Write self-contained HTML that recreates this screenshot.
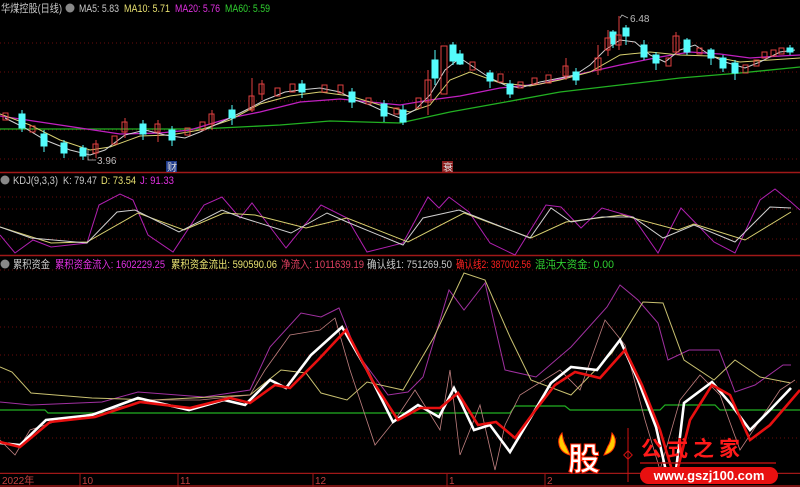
<!DOCTYPE html>
<html><head><meta charset="utf-8"><style>
html,body{margin:0;padding:0;background:#000;width:800px;height:487px;overflow:hidden}
svg{display:block}
text{font-family:"Liberation Sans","Noto Sans CJK SC",sans-serif}
</style></head><body>
<svg width="800" height="487" viewBox="0 0 800 487" xmlns="http://www.w3.org/2000/svg">
<rect width="800" height="487" fill="#000"/>
<g stroke="#6a0d0d" stroke-width="1" stroke-dasharray="1,3">
<line x1="0" y1="43" x2="800" y2="43"/><line x1="0" y1="72" x2="800" y2="72"/><line x1="0" y1="101" x2="800" y2="101"/><line x1="0" y1="130" x2="800" y2="130"/><line x1="0" y1="159" x2="800" y2="159"/>
<line x1="0" y1="197" x2="800" y2="197"/><line x1="0" y1="209" x2="800" y2="209"/><line x1="0" y1="224" x2="800" y2="224"/><line x1="0" y1="239" x2="800" y2="239"/>
<line x1="0" y1="270" x2="800" y2="270"/><line x1="0" y1="299" x2="800" y2="299"/><line x1="0" y1="327" x2="800" y2="327"/><line x1="0" y1="355" x2="800" y2="355"/><line x1="0" y1="382" x2="800" y2="382"/><line x1="0" y1="438" x2="800" y2="438"/>
</g>
<g stroke="#a01818" stroke-width="1.5">
<line x1="0" y1="172.5" x2="800" y2="172.5"/><line x1="0" y1="255.5" x2="800" y2="255.5"/><line x1="0" y1="473.5" x2="800" y2="473.5"/><line x1="0" y1="486" x2="800" y2="486"/>
</g>
<g font-size="11">
<text x="1" y="12" fill="#c8c8c8" textLength="61" lengthAdjust="spacingAndGlyphs">华煤控股(日线)</text>
<circle cx="70" cy="8" r="4.5" fill="#888"/>
<text x="79" y="12" fill="#c8c8c8" textLength="40" lengthAdjust="spacingAndGlyphs">MA5: 5.83</text>
<text x="124" y="12" fill="#e8e070" textLength="46" lengthAdjust="spacingAndGlyphs">MA10: 5.71</text>
<text x="175" y="12" fill="#e030e0" textLength="45" lengthAdjust="spacingAndGlyphs">MA20: 5.76</text>
<text x="225" y="12" fill="#30d030" textLength="45" lengthAdjust="spacingAndGlyphs">MA60: 5.59</text>
<circle cx="5" cy="180" r="4.5" fill="#888"/>
<text x="13" y="184" fill="#c8c8c8" textLength="45" lengthAdjust="spacingAndGlyphs">KDJ(9,3,3)</text>
<text x="63" y="184" fill="#c8c8c8" textLength="34" lengthAdjust="spacingAndGlyphs">K: 79.47</text>
<text x="101" y="184" fill="#e8e070" textLength="35" lengthAdjust="spacingAndGlyphs">D: 73.54</text>
<text x="140" y="184" fill="#e030e0" textLength="34" lengthAdjust="spacingAndGlyphs">J: 91.33</text>
<circle cx="5" cy="264" r="4.5" fill="#888"/>
<text x="13" y="268" fill="#c8c8c8" textLength="37" lengthAdjust="spacingAndGlyphs">累积资金</text>
<text x="55" y="268" fill="#e030e0" textLength="110" lengthAdjust="spacingAndGlyphs">累积资金流入: 1602229.25</text>
<text x="171" y="268" fill="#e8e070" textLength="106" lengthAdjust="spacingAndGlyphs">累积资金流出: 590590.06</text>
<text x="281" y="268" fill="#e04060" textLength="83" lengthAdjust="spacingAndGlyphs">净流入: 1011639.19</text>
<text x="367" y="268" fill="#c8c8c8" textLength="85" lengthAdjust="spacingAndGlyphs">确认线1: 751269.50</text>
<text x="456" y="268" fill="#ff2020" textLength="75" lengthAdjust="spacingAndGlyphs">确认线2: 387002.56</text>
<text x="535" y="268" fill="#30d030" textLength="79" lengthAdjust="spacingAndGlyphs">混沌大资金: 0.00</text>
</g>
<polyline fill="none" stroke="#22b022" stroke-width="1.3" points="0,129 100,129 200,129 280,125 330,121 400,123 450,112 500,103 560,92 620,85 680,78 740,73 800,67"/>
<polyline fill="none" stroke="#c020c0" stroke-width="1.3" points="0,116 40,122 80,128 120,134 160,133 190,130 230,118 260,112 300,102 340,99 370,102 400,105 430,100 460,96 500,88 540,84 580,74 620,65 660,57 690,52 720,54 750,58 780,56 800,55"/>
<polyline fill="none" stroke="#d8d070" stroke-width="1" points="0,114 30,125 60,140 90,150 110,147 140,136 170,135 200,130 230,120 260,104 290,96 320,92 350,96 380,105 410,112 430,105 450,80 470,72 500,83 530,86 560,80 590,72 620,55 650,52 680,55 710,56 740,62 770,60 800,58"/>
<polyline fill="none" stroke="#d0d0d0" stroke-width="1" points="5,118 25,128 45,140 70,150 90,155 105,150 125,135 145,130 165,135 185,138 200,132 215,125 230,118 250,108 265,100 285,92 300,90 320,88 340,92 355,100 370,105 385,112 400,118 415,110 430,95 445,70 460,58 475,68 490,78 505,85 520,88 540,82 560,78 575,75 590,65 605,50 620,40 635,42 650,55 665,62 680,50 695,45 710,55 725,62 745,68 760,62 780,52 795,50"/>
<g stroke-width="1">
<g fill="#54fcfc" stroke="#54fcfc">
<line x1="22" y1="110" x2="22" y2="132"/><rect x="19" y="114" width="6" height="14"/>
<line x1="44" y1="130" x2="44" y2="152"/><rect x="41" y="134" width="6" height="12"/>
<line x1="64" y1="140" x2="64" y2="158"/><rect x="61" y="143" width="6" height="10"/>
<line x1="83" y1="145" x2="83" y2="160"/><rect x="80" y="148" width="6" height="8"/>
<line x1="143" y1="120" x2="143" y2="140"/><rect x="140" y="124" width="6" height="10"/>
<line x1="172" y1="126" x2="172" y2="146"/><rect x="169" y="130" width="6" height="10"/>
<line x1="232" y1="105" x2="232" y2="125"/><rect x="229" y="110" width="6" height="8"/>
<line x1="302" y1="80" x2="302" y2="98"/><rect x="299" y="84" width="6" height="8"/>
<line x1="352" y1="88" x2="352" y2="108"/><rect x="349" y="92" width="6" height="10"/>
<line x1="384" y1="100" x2="384" y2="122"/><rect x="381" y="104" width="6" height="12"/>
<line x1="403" y1="105" x2="403" y2="125"/><rect x="400" y="110" width="6" height="12"/>
<line x1="435" y1="50" x2="435" y2="85"/><rect x="432" y="60" width="6" height="18"/>
<line x1="453" y1="42" x2="453" y2="65"/><rect x="450" y="45" width="6" height="16"/>
<line x1="460" y1="50" x2="460" y2="65"/><rect x="457" y="54" width="6" height="10"/>
<line x1="490" y1="70" x2="490" y2="88"/><rect x="487" y="73" width="6" height="8"/>
<line x1="510" y1="80" x2="510" y2="98"/><rect x="507" y="84" width="6" height="10"/>
<line x1="576" y1="68" x2="576" y2="85"/><rect x="573" y="72" width="6" height="8"/>
<line x1="613" y1="30" x2="613" y2="48"/><rect x="610" y="32" width="6" height="12"/>
<line x1="626" y1="25" x2="626" y2="45"/><rect x="623" y="28" width="6" height="8"/>
<line x1="644" y1="40" x2="644" y2="60"/><rect x="641" y="45" width="6" height="12"/>
<line x1="656" y1="52" x2="656" y2="70"/><rect x="653" y="55" width="6" height="8"/>
<line x1="687" y1="38" x2="687" y2="55"/><rect x="684" y="40" width="6" height="12"/>
<line x1="711" y1="48" x2="711" y2="65"/><rect x="708" y="50" width="6" height="8"/>
<line x1="723" y1="55" x2="723" y2="72"/><rect x="720" y="58" width="6" height="10"/>
<line x1="735" y1="60" x2="735" y2="80"/><rect x="732" y="63" width="6" height="10"/>
<line x1="790" y1="45" x2="790" y2="55"/><rect x="787" y="48" width="6" height="4"/>
</g>
<g fill="none" stroke="#e04040">
<rect x="3" y="113" width="5" height="7"/>
<rect x="30" y="126" width="5" height="6"/>
<line x1="96" y1="140" x2="96" y2="158"/><rect x="93" y="144" width="5" height="9"/>
<rect x="112" y="136" width="5" height="8"/>
<line x1="125" y1="118" x2="125" y2="138"/><rect x="122" y="122" width="5" height="10"/>
<line x1="158" y1="120" x2="158" y2="142"/><rect x="155" y="124" width="5" height="8"/>
<rect x="185" y="128" width="5" height="7"/>
<rect x="200" y="122" width="5" height="8"/>
<line x1="212" y1="110" x2="212" y2="130"/><rect x="209" y="114" width="5" height="10"/>
<line x1="252" y1="78" x2="252" y2="112"/><rect x="249" y="96" width="5" height="14"/>
<line x1="262" y1="80" x2="262" y2="100"/><rect x="259" y="84" width="5" height="10"/>
<rect x="275" y="88" width="5" height="8"/>
<rect x="290" y="84" width="5" height="8"/>
<rect x="322" y="85" width="5" height="7"/>
<rect x="338" y="85" width="5" height="8"/>
<rect x="366" y="98" width="5" height="6"/>
<rect x="394" y="108" width="5" height="6"/>
<rect x="416" y="98" width="5" height="10"/>
<line x1="428" y1="70" x2="428" y2="115"/><rect x="425" y="80" width="6" height="22"/>
<rect x="441" y="46" width="6" height="48"/>
<rect x="470" y="62" width="5" height="8"/>
<rect x="498" y="74" width="5" height="8"/>
<rect x="518" y="82" width="5" height="6"/>
<rect x="532" y="78" width="5" height="6"/>
<rect x="546" y="75" width="5" height="8"/>
<line x1="566" y1="58" x2="566" y2="80"/><rect x="563" y="66" width="5" height="10"/>
<line x1="598" y1="45" x2="598" y2="75"/><rect x="595" y="58" width="6" height="12"/>
<line x1="608" y1="30" x2="608" y2="56"/><rect x="605" y="38" width="5" height="12"/>
<line x1="619" y1="16" x2="619" y2="50"/><rect x="616" y="35" width="5" height="10"/>
<rect x="666" y="58" width="5" height="8"/>
<line x1="676" y1="32" x2="676" y2="55"/><rect x="673" y="36" width="6" height="16"/>
<rect x="697" y="48" width="5" height="6"/>
<rect x="743" y="65" width="5" height="8"/>
<rect x="754" y="60" width="5" height="6"/>
<rect x="762" y="52" width="5" height="6"/>
<rect x="771" y="50" width="5" height="6"/>
<rect x="779" y="48" width="5" height="6"/>
</g>
</g>
<polyline points="88,150 88,160 96,160" fill="none" stroke="#bbb" stroke-width="0.8"/>
<text x="97" y="164" font-size="10" fill="#bbb">3.96</text>
<polyline points="620,18 622,15 628,18" fill="none" stroke="#bbb" stroke-width="0.8"/>
<text x="630" y="22" font-size="10" fill="#bbb">6.48</text>
<rect x="166" y="161" width="11" height="11" fill="#1e3a8a"/><text x="167" y="171" font-size="10" fill="#ddd">财</text>
<rect x="442" y="161" width="11" height="11" fill="#8a1e1e"/><text x="443" y="171" font-size="10" fill="#ddd">衰</text>
<polyline fill="none" stroke="#b020b0" stroke-width="1" points="0,235 15,253 33,240 51,247 87,243 99,205 120,194 133,200 148,235 173,252 204,205 222,197 240,218 252,203 286,248 321,205 347,218 367,252 403,243 428,197 439,208 449,197 469,212 490,243 515,255 546,205 561,207 581,228 602,208 633,217 658,253 681,208 714,242 735,253 760,200 775,189 791,202 800,210"/>
<polyline fill="none" stroke="#d8d070" stroke-width="1" points="0,227 51,243 87,242 138,213 184,230 224,213 255,215 306,228 347,218 408,242 464,213 531,238 566,222 622,215 678,230 694,224 745,240 791,212"/>
<polyline fill="none" stroke="#d0d0d0" stroke-width="1" points="0,227 31,238 87,243 117,212 135,210 179,232 222,210 240,217 291,233 327,213 347,222 403,245 423,218 459,210 530,238 551,208 571,222 602,217 633,217 663,238 694,225 735,242 770,207 791,208"/>
<polyline fill="none" stroke="#22b022" stroke-width="1.2" points="0,410 45,410 48,413 510,413 515,406 565,406 570,410 660,410 665,405 715,405 720,410 800,410"/>
<polyline fill="none" stroke="#a030a0" stroke-width="1" points="0,402 31,405 102,402 138,392 204,397 250,390 270,347 301,313 321,317 339,308 357,353 388,395 408,392 423,377 449,290 464,310 485,283 505,370 536,377 571,347 607,307 620,285 638,300 658,323 668,360 689,350 719,350 735,392 755,385 783,365 791,365"/>
<polyline fill="none" stroke="#c8c070" stroke-width="1" points="0,367 12,372 31,393 92,398 153,400 250,395 281,370 306,373 321,393 347,400 367,382 403,390 434,337 464,273 485,280 510,337 531,380 571,395 612,353 643,302 663,303 684,360 714,380 735,360 760,377 791,383"/>
<polyline fill="none" stroke="#c08080" stroke-width="0.8" points="0,440 15,455 30,430 60,420 100,412 150,400 200,400 250,395 265,370 290,335 320,330 335,318 350,370 375,445 395,420 415,390 440,430 450,370 460,455 480,405 495,470 505,425 520,395 560,370 580,390 605,320 625,345 645,420 660,470 680,400 700,375 720,395 740,450 760,420 780,390 795,380"/>
<polyline fill="none" stroke="#fff" stroke-width="2.6" points="0,443 20,445 46,420 92,415 138,398 189,410 224,400 245,405 270,380 286,388 311,355 342,327 367,370 393,422 418,405 439,417 454,388 474,430 490,425 510,452 531,417 551,383 571,367 597,370 620,340 638,380 656,427 668,480 676,470 684,403 712,382 730,403 750,430 770,410 791,388"/>
<polyline fill="none" stroke="#e81010" stroke-width="2.6" points="0,442 20,447 50,422 95,417 140,402 190,408 230,398 250,403 275,385 290,388 318,360 346,330 372,380 398,420 420,408 440,408 458,393 478,425 496,422 515,438 534,412 555,385 575,372 600,378 625,350 642,385 660,430 675,480 690,420 712,385 730,395 750,440 770,425 800,390"/>
<rect x="0" y="474" width="800" height="11" fill="#000"/>
<g stroke="#a01818" stroke-width="1"><line x1="80" y1="474" x2="80" y2="487"/><line x1="178" y1="474" x2="178" y2="487"/><line x1="313" y1="474" x2="313" y2="487"/><line x1="447" y1="474" x2="447" y2="487"/><line x1="545" y1="474" x2="545" y2="487"/></g>
<g font-size="10" fill="#c04040">
<text x="2" y="484">2022年</text><text x="82" y="484">10</text><text x="180" y="484">11</text><text x="315" y="484">12</text><text x="449" y="484">1</text><text x="547" y="484">2</text>
</g>
<path d="M562,433 C556,440 558,452 570,455 L566,446 C563,442 563,438 562,433 Z" fill="#ffcc00" stroke="#ff3300" stroke-width="1"/>
<path d="M612,433 C618,440 616,452 604,455 L608,446 C611,442 611,438 612,433 Z" fill="#ffcc00" stroke="#ff3300" stroke-width="1"/>
<text x="568" y="470" font-size="32" font-weight="bold" fill="#fff" stroke="#ff2000" stroke-width="1" font-family="'Noto Sans CJK SC',sans-serif">股</text>
<line x1="628" y1="428" x2="628" y2="482" stroke="#d01010" stroke-width="1"/>
<rect x="625" y="452" width="6" height="6" transform="rotate(45 628 455)" fill="none" stroke="#d01010"/>
<text x="641" y="456" font-size="21" font-weight="bold" fill="#ff1a1a" letter-spacing="5" font-family="'Noto Serif CJK SC','Noto Sans CJK SC',serif">公式之家</text>
<line x1="640" y1="463" x2="776" y2="463" stroke="#b01010" stroke-width="1.5"/>
<rect x="640" y="467" width="138" height="17" rx="8.5" fill="#e81010"/>
<text x="709" y="480" font-size="13" font-weight="bold" fill="#fff" text-anchor="middle">www.gszj100.com</text>
</svg>
</body></html>
